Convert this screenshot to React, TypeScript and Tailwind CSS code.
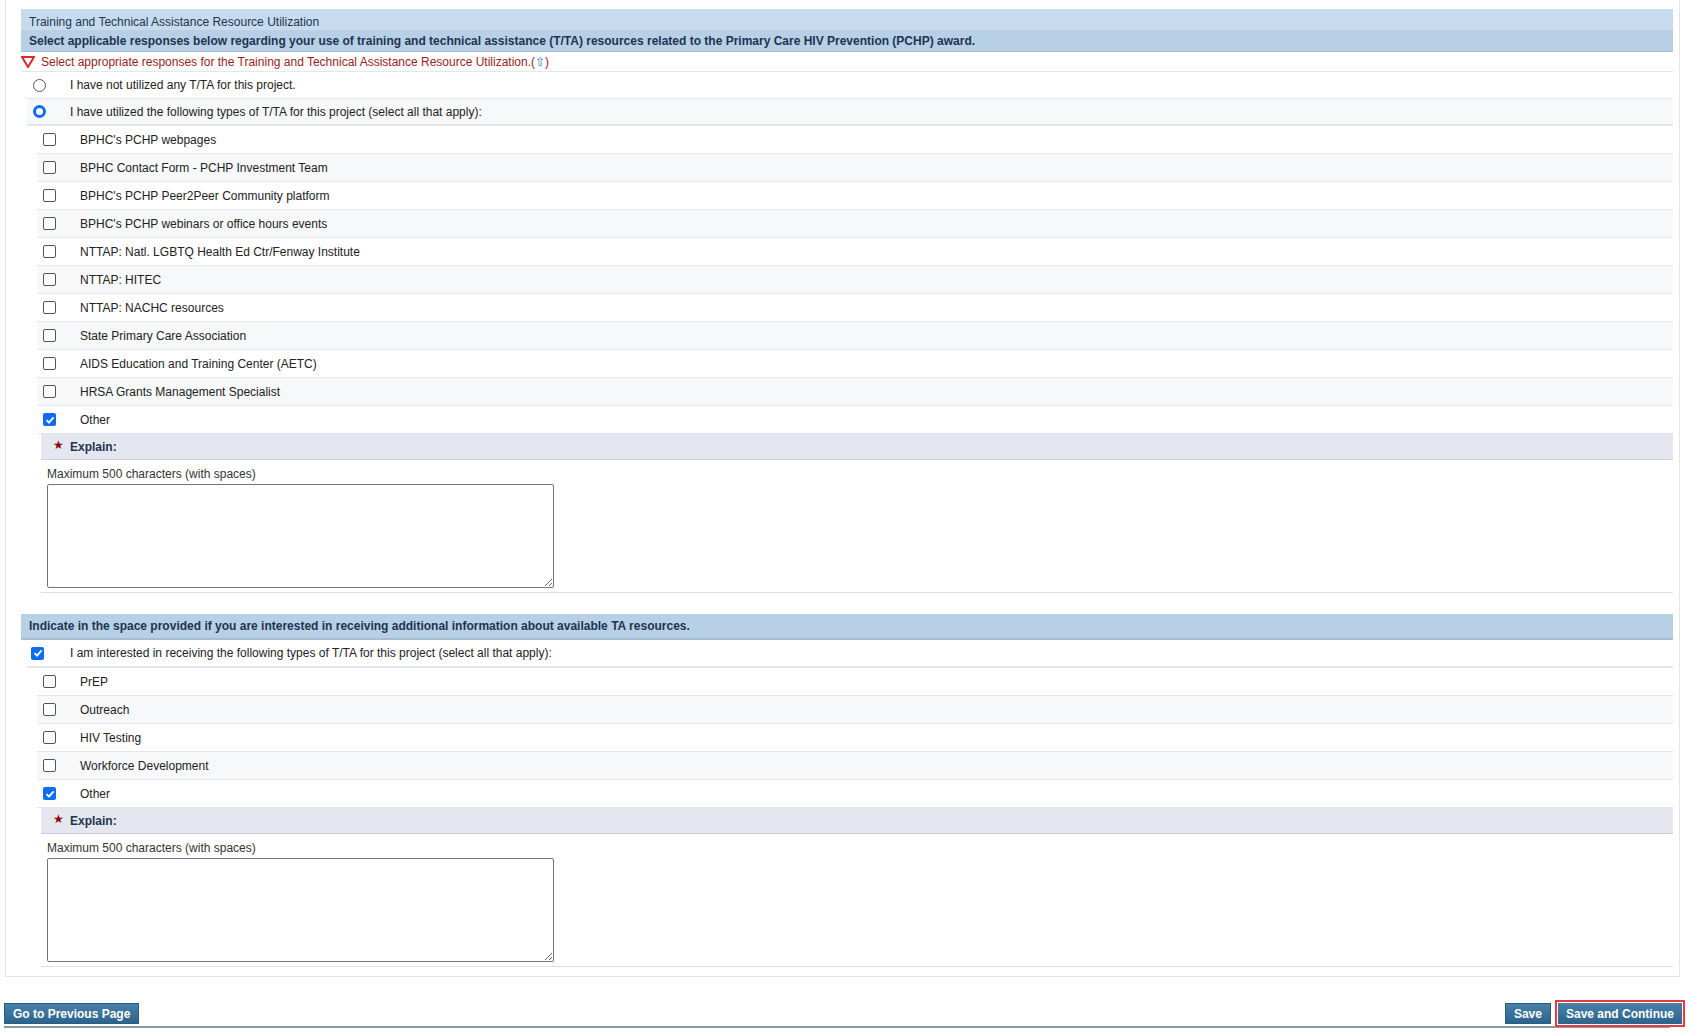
import React from 'react';

const first = [
  "BPHC's PCHP webpages",
  'BPHC Contact Form - PCHP Investment Team',
  "BPHC's PCHP Peer2Peer Community platform",
  "BPHC's PCHP webinars or office hours events",
  'NTTAP: Natl. LGBTQ Health Ed Ctr/Fenway Institute',
  'NTTAP: HITEC',
  'NTTAP: NACHC resources',
  'State Primary Care Association',
  'AIDS Education and Training Center (AETC)',
  'HRSA Grants Management Specialist',
];
const second = ['PrEP', 'Outreach', 'HIV Testing', 'Workforce Development'];

function Box({ checked }: { checked?: boolean }) {
  return checked ? (
    <span className="w-[13px] h-[13px] rounded-[2px] bg-[#0b6cf5] flex items-center justify-center">
      <svg width="10" height="10" viewBox="0 0 10 10"><path d="M1.5 5.2 4 7.6 8.6 2.4" stroke="white" strokeWidth="1.8" fill="none" /></svg>
    </span>
  ) : (
    <span className="w-[13px] h-[13px] rounded-[2px] border border-[#555] bg-white" />
  );
}

function CheckRow({ label, checked, i }: { label: string; checked?: boolean; i: number }) {
  return (
    <div className={`h-[28px] flex items-center border-b border-[#e3e6ea] ml-[16px] ${i % 2 ? 'bg-[#f7f8fa]' : 'bg-white'}`}>
      <div className="w-[43px] pl-[6px] flex items-center"><Box checked={checked} /></div>
      <span>{label}</span>
    </div>
  );
}

function Explain() {
  return (
    <div className="ml-[20px]">
      <div className="h-[26px] bg-[#e4e7ef] border-b border-[#c9ced8] flex items-center pl-[12px] gap-[6px]">
        <span className="text-[#8b0000] text-[12px] leading-none -mt-1">★</span>
        <span className="font-bold text-[#1f3550]">Explain:</span>
      </div>
      <div className="border-b border-[#dcdfe3] pl-[6px] pt-[6px] pb-[4px]">
        <div className="text-[#333] leading-[16px]">Maximum 500 characters (with spaces)</div>
        <textarea className="mt-[2px] w-[507px] h-[104px] border border-[#767676] rounded-[2px] block" />
      </div>
    </div>
  );
}

export default function App() {
  return (
    <div className="w-[1692px] h-[1032px] bg-white text-[12px] text-[#222] overflow-hidden" style={{ fontFamily: '"Liberation Sans", Arial, sans-serif' }}>
      <div className="ml-[5px] w-[1675px] h-[977px] border border-[#e4e4e4] border-t-0 pl-[15px] pr-[6px] pt-[9px]">
        <div className="bg-[#c6dbed] text-[#1d3452]">
          <div className="pl-[8px] pt-[4px] h-[21px]">Training and Technical Assistance Resource Utilization</div>
          <div className="pl-[8px] h-[22px] bg-[#b8d0e5] font-bold border-b border-[#a6bdd3] flex items-center">Select applicable responses below regarding your use of training and technical assistance (T/TA) resources related to the Primary Care HIV Prevention (PCHP) award.</div>
        </div>
        <div className="h-[20px] flex items-center gap-[6px] text-[#9b1c1c] border-b border-[#e3e6ea]">
          <svg width="14" height="12" viewBox="0 0 14 12"><path d="M1 1h12L7 11z" fill="none" stroke="#e0282e" strokeWidth="2" /></svg>
          <span>Select appropriate responses for the Training and Technical Assistance Resource Utilization.(<span className="text-[#2a78c8]">⇧</span>)</span>
        </div>
        <div className="h-[27px] flex items-center border-b border-[#e3e6ea] ml-[6px]">
          <span className="w-[13px] h-[13px] rounded-full border border-[#555] ml-[6px] mr-[24px]" />
          <span>I have not utilized any T/TA for this project.</span>
        </div>
        <div className="h-[27px] flex items-center border-b-2 border-[#e3e6ea] ml-[6px] bg-[#f7f8fa]">
          <span className="w-[13px] h-[13px] rounded-full border-[3.5px] border-[#0b6cf5] ml-[6px] mr-[24px] bg-white" />
          <span>I have utilized the following types of T/TA for this project (select all that apply):</span>
        </div>
        {first.map((l, i) => <CheckRow key={l} label={l} i={i} />)}
        <CheckRow label="Other" checked i={0} />
        <Explain />
        <div className="h-[21px]" />
        <div className="h-[26px] bg-[#b8d0e5] border-b-2 border-[#a6bdd3] text-[#1d3452] font-bold flex items-center pl-[8px]">Indicate in the space provided if you are interested in receiving additional information about available TA resources.</div>
        <div className="h-[28px] flex items-center border-b-2 border-[#e3e6ea] ml-[6px]">
          <span className="ml-[4px] mr-[26px] flex"><Box checked /></span>
          <span>I am interested in receiving the following types of T/TA for this project (select all that apply):</span>
        </div>
        {second.map((l, i) => <CheckRow key={l} label={l} i={i} />)}
        <CheckRow label="Other" checked i={0} />
        <Explain />
      </div>
      <div className="h-[24px]" />
      <div className="flex items-center pl-[4px] pr-[7px] h-[25px]">
        <button className="h-[21px] px-[8px] text-white font-bold text-[12px] bg-gradient-to-b from-[#4a81a9] to-[#2a638c] border border-[#2a5d82]">Go to Previous Page</button>
        <div className="flex-1" />
        <button className="h-[21px] px-[8px] text-white font-bold text-[12px] bg-gradient-to-b from-[#4a81a9] to-[#2a638c] border border-[#2a5d82] mr-[4px]">Save</button>
        <div className="border-[2px] border-[#ee3a3f] p-[1px]">
          <button className="h-[21px] px-[8px] text-white font-bold text-[12px] bg-gradient-to-b from-[#4a81a9] to-[#2a638c]">Save and Continue</button>
        </div>
      </div>
      <div className="ml-[4px] w-[1666px] h-[2px] bg-[#8a99a8]" />
    </div>
  );
}
